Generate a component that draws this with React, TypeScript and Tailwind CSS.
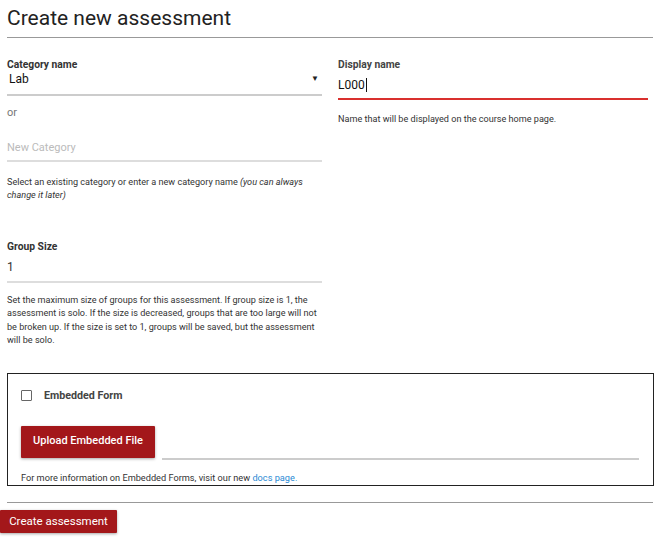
export default function App() {
  return (
    <div className="w-[667px] h-[539px] bg-white font-['Roboto',sans-serif] text-[#222] overflow-hidden">
      <div className="ml-[7px] w-[646px] pt-[4px]">
        <h1 className="text-[21px] leading-[28px] font-normal text-[#222]">Create new assessment</h1>
        <div className="mt-[5px] h-[1px] bg-[#999]" />

        <div className="mt-[20px] flex gap-[16px]">
          {/* left column */}
          <div className="w-[315px] flex flex-col">
            <label className="text-[10.3px] leading-[13px] font-bold text-[#333]">Category name</label>
            <div className="h-[25px] border-b-2 border-[#ccc] flex items-start justify-between pl-[2px] pr-[3px] pt-[1px]">
              <span className="text-[12px] leading-[14px] text-[#111]">Lab</span>
              <span className="text-[8px] leading-[14px] text-[#222]">▼</span>
            </div>
            <div className="mt-[10px] text-[11px] leading-[13px] text-[#777]">or</div>
            <div className="h-[43px] border-b-2 border-[#ddd] pt-[15px]">
              <span className="text-[11px] leading-[14px] text-[#bbb]">New Category</span>
            </div>
            <p className="mt-[14px] text-[9.1px] leading-[13px] text-[#333]">
              Select an existing category or enter a new category name <i>(you can always change it later)</i>
            </p>

            <label className="mt-[38px] text-[10.3px] leading-[13px] font-bold text-[#333]">Group Size</label>
            <div className="h-[30px] border-b-2 border-[#ddd] pt-[1px]">
              <span className="text-[12px] leading-[14px] text-[#333]">1</span>
            </div>
            <p className="mt-[11px] text-[9.1px] leading-[13.4px] text-[#333]">
              Set the maximum size of groups for this assessment. If group size is 1, the assessment is solo. If the
              size is decreased, groups that are too large will not be broken up. If the size is set to 1, groups will
              be saved, but the assessment will be solo.
            </p>
          </div>

          {/* right column */}
          <div className="w-[310px] flex flex-col">
            <label className="text-[10.3px] leading-[13px] font-bold text-[#444]">Display name</label>
            <div className="h-[29px] border-b-2 border-[#d9302e] pt-[7px] flex items-start">
              <span className="text-[12px] leading-[14px] text-[#111]">L000</span>
              <span className="ml-[1px] w-[1px] h-[14px] bg-[#111]" />
            </div>
            <p className="mt-[13px] text-[9.1px] leading-[13px] text-[#333]">
              Name that will be displayed on the course home page.
            </p>
          </div>
        </div>

        {/* embedded form box */}
        <div className="mt-[25px] w-[647px] h-[113px] border border-[#222] pl-[13px] pr-[14px] pt-[16px]">
          <div className="flex items-center h-[11px]">
            <span className="w-[11px] h-[11px] border-[1.5px] border-[#666] rounded-[1px]" />
            <span className="ml-[12px] text-[10.7px] leading-[13px] font-bold text-[#444]">Embedded Form</span>
          </div>
          <div className="mt-[25px] flex items-end gap-[7px]">
            <button className="w-[134px] h-[32px] bg-[#a3171a] text-white text-[11px] font-medium rounded-[1px] shadow-[0_1px_3px_rgba(0,0,0,0.35)]">
              Upload Embedded File
            </button>
            <div className="flex-1 h-[2px] bg-[#ccc] mb-[-2px]" />
          </div>
          <p className="mt-[14px] text-[9.2px] leading-[12px] text-[#333]">
            For more information on Embedded Forms, visit our new <a className="text-[#2a8ad4]">docs page.</a>
          </p>
        </div>

        <div className="mt-[16px] h-[1px] bg-[#999]" />
        <button className="mt-[7px] ml-[-7px] w-[117px] h-[23px] bg-[#a3171a] text-white text-[11.5px] rounded-[1px] shadow-[0_1px_3px_rgba(0,0,0,0.35)]">
          Create assessment
        </button>
      </div>
    </div>
  )
}
